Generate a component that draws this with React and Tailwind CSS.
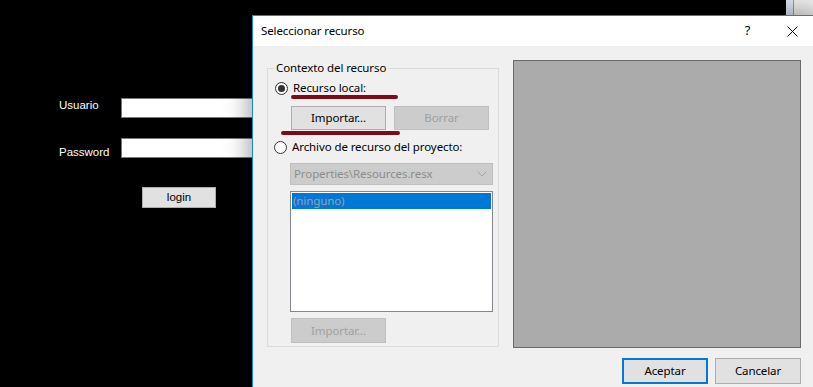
import React from "react";

const ui = { fontFamily: '"Noto Sans", "Open Sans", sans-serif' };
const winforms = { fontFamily: '"Liberation Sans", Arial, sans-serif' };

function Radio({ checked }) {
  return (
    <span className="flex h-[13px] w-[13px] items-center justify-center rounded-full border border-[#333333] bg-white">
      {checked && <span className="h-[7px] w-[7px] rounded-full bg-[#333333]" />}
    </span>
  );
}

function Btn({ children, className = "", disabled, primary }) {
  const base = disabled
    ? "border border-[#bfbfbf] bg-[#cccccc] text-[#a0a0a0]"
    : primary
    ? "border-2 border-[#0078d7] bg-[#e1e1e1] text-black"
    : "border border-[#adadad] bg-[#e1e1e1] text-black";
  return (
    <div className={`flex items-center justify-center ${base} ${className}`}>
      {children}
    </div>
  );
}

export default function App() {
  return (
    <div className="relative h-[387px] w-[813px] overflow-hidden bg-black">
      {/* underlying login window */}
      <div className="pl-[59px] pt-[98px] text-[11.5px] text-white" style={winforms}>
        <div className="flex h-[20px] items-start">
          <span className="w-[62px] leading-[14px]">Usuario</span>
          <div className="h-[20px] w-[200px] border border-[#7a7a7a] bg-white" />
        </div>
        <div className="mt-[20px] flex h-[20px] items-start">
          <span className="mt-[7px] w-[62px] leading-[14px]">Password</span>
          <div className="h-[20px] w-[200px] border border-[#7a7a7a] bg-white" />
        </div>
        <div className="ml-[83px] mt-[29px] flex h-[21px] w-[74px] items-center justify-center border border-[#adadad] bg-[#e1e1e1] text-black">
          login
        </div>
      </div>

      {/* window behind at top right */}
      <div className="absolute left-[786px] top-0 flex h-[15px]">
        <div className="w-[7px] bg-[#dde8f3]" />
        <div className="w-[1px] bg-[#9a9a9a]" />
        <div className="w-[19px] bg-[#f0f0f0]" />
      </div>

      {/* dialog window */}
      <div
        className="absolute left-[252px] top-[15px] flex h-[380px] w-[564px] flex-col border border-[#1883d7] bg-[#f0f0f0] text-[11.5px] tracking-[-0.1px] shadow-[0_0_22px_4px_rgba(0,0,0,0.35)]"
        style={ui}
      >
        <div className="flex h-[30px] items-center bg-white text-black">
          <span className="pl-[8px]">Seleccionar recurso</span>
          <div className="ml-auto flex h-full">
            <div className="flex w-[45px] items-center justify-center text-[13px]">?</div>
            <div className="flex w-[45px] items-center justify-center">
              <svg width="11" height="11" viewBox="0 0 11 11">
                <path d="M0.5 0.5 L10.5 10.5 M10.5 0.5 L0.5 10.5" stroke="#000" strokeWidth="1" />
              </svg>
            </div>
          </div>
        </div>

        <div className="flex gap-[14px] px-[14px] pt-[14px] text-black">
          {/* group box */}
          <div className="relative mt-[8px] h-[279px] w-[232px] border border-[#dcdcdc]">
            <span className="absolute left-[6px] top-[-9px] bg-[#f0f0f0] px-[2px] leading-[16px]">
              Contexto del recurso
            </span>

            <div className="mt-[11px] flex h-[16px] items-center gap-[5px] pl-[7px]">
              <Radio checked />
              <span>Recurso local:</span>
            </div>
            <div className="ml-[23px] mt-[10px] flex gap-[8px]">
              <Btn className="h-[24px] w-[95px]">Importar...</Btn>
              <Btn disabled className="h-[24px] w-[95px]">Borrar</Btn>
            </div>
            <div className="mt-[9px] flex h-[16px] items-center gap-[5px] pl-[6px]">
              <Radio />
              <span>Archivo de recurso del proyecto:</span>
            </div>
            <div className="ml-[22px] mt-[8px] flex h-[22px] w-[203px] items-center border border-[#bfbfbf] bg-[#cccccc] pl-[3px] pr-[5px] text-[#8c8c8c]">
              <span>Properties\Resources.resx</span>
              <svg className="ml-auto" width="10" height="6" viewBox="0 0 10 6">
                <path d="M0.5 0.5 L5 5 L9.5 0.5" stroke="#a6a6a6" strokeWidth="1" fill="none" />
              </svg>
            </div>
            <div className="ml-[22px] mt-[6px] h-[121px] w-[203px] border border-[#828790] bg-white p-[1px]">
              <div className="flex h-[16px] items-center bg-[#0078d7] pl-[1px] text-[#9aa0a8]">(ninguno)</div>
            </div>
            <div className="ml-[23px] mt-[6px] flex">
              <Btn disabled className="h-[25px] w-[95px]">Importar...</Btn>
            </div>

            {/* annotation underlines */}
            <div className="absolute left-[23px] top-[26px] h-[4px] w-[107px] rounded-full bg-[#7d0a1a]" />
            <div className="absolute left-[13px] top-[62px] h-[4px] w-[119px] rounded-full bg-[#7d0a1a]" />
          </div>

          {/* preview */}
          <div className="h-[288px] w-[288px] border border-[#696969] bg-[#ababab]" />
        </div>

        <div className="mt-[10px] flex justify-end gap-[7px] pr-[14px]">
          <Btn primary className="h-[26px] w-[86px]">Aceptar</Btn>
          <Btn className="h-[26px] w-[86px]">Cancelar</Btn>
        </div>
      </div>
    </div>
  );
}
